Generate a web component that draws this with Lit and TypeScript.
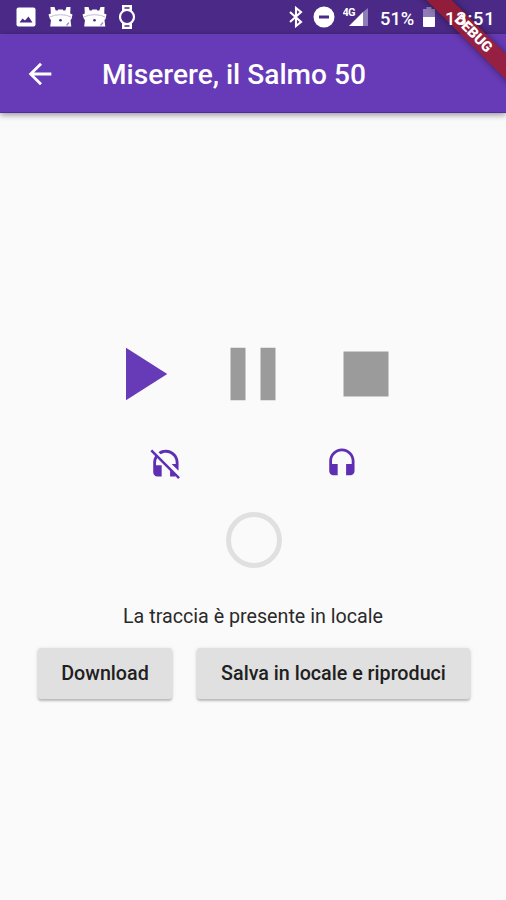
import { LitElement, html, css, svg } from "lit";
import { customElement } from "lit/decorators.js";

const robot = svg`
  <path fill="#fff" d="M2.500 0h4l1.200 3.500h2l.5-1h4.600l.5 1h2L18.500 0h4l-.3 6.500 2.300 1-1 4.500-1 1 .8 6.500H2.200L3 13l-1-1L.5 7.500l2.300-1z"/>
  <path d="M2 10q4-2.300 10.500-2.300T23 10" stroke="#b3a6d0" fill="none" stroke-width=".8"/>
  <circle cx="12.500" cy="13.300" r="1.300" fill="#4a2a86"/>
  <path d="M21 15.500l-2.500 3" stroke="#9c8cc2" stroke-width="1.200"/>`;

@customElement("app-root")
export class AppRoot extends LitElement {
  static styles = css`
    :host {
      display: flex;
      flex-direction: column;
      width: 506px;
      height: 900px;
      position: relative;
      overflow: hidden;
      background: #fafafa;
      font-family: Roboto, sans-serif;
    }
    svg { display: block; flex: none; }
    .status {
      height: 34px;
      flex: none;
      box-sizing: border-box;
      background: #4a2a86;
      color: #fff;
      display: flex;
      align-items: center;
      padding: 0 10px 0 16px;
    }
    .notifications { display: flex; gap: 9px; align-items: center; }
    .robot { margin-left: 3px; }
    .robot + .robot { margin-left: 0; }
    .watch { margin-left: 2px; }
    .system { margin-left: auto; display: flex; align-items: center; font-size: 18.3px; font-weight: 500; }
    .dnd { margin-left: 9px; }
    .signal { margin-left: 8px; }
    .percent { margin-left: 11px; width: 37px; white-space: nowrap; padding-top: 2px; }
    .battery { margin-left: 6px; }
    .clock {
      margin-left: 10px;
      width: 51px;
      letter-spacing: 0.8px;
      white-space: nowrap;
      padding-top: 2px;
      position: relative;
      z-index: 3;
    }
    .bar {
      height: 79px;
      flex: none;
      box-sizing: border-box;
      background: #673ab7;
      border-bottom: 1px solid #5429a6;
      box-shadow: 0 2px 6px rgba(0, 0, 0, 0.4);
      color: #fff;
      display: flex;
      align-items: center;
      padding-left: 23px;
    }
    .back { margin-top: 1px; }
    .title { margin: 3px 0 0 45px; font-size: 28.1px; font-weight: 500; white-space: nowrap; width: 266px; }
    .body { flex: 1; display: flex; flex-direction: column; align-items: center; padding: 216.4px 0 0; }
    .transport { display: flex; gap: 22.5px; }
    .outputs { display: flex; gap: 142.4px; margin: 28.1px 0 0 1px; }
    .ring {
      box-sizing: border-box;
      width: 56px;
      height: 56px;
      border: 5.5px solid #e0e0e0;
      border-radius: 50%;
      margin: 30.75px 0 0 1px;
    }
    .message { margin-top: 37px; font-size: 19.7px; line-height: 24px; color: #2a2a2a; white-space: nowrap; }
    .actions { display: flex; gap: 25px; margin: 18.75px 0 0 2px; }
    .button {
      height: 51px;
      border: 0;
      border-radius: 3px;
      background: #e0e0e0;
      color: #202020;
      font: 500 19.7px Roboto, sans-serif;
      padding: 0;
      white-space: nowrap;
      box-shadow: 0 2px 2px rgba(0, 0, 0, 0.18), 0 1px 4px rgba(0, 0, 0, 0.14);
    }
    .download { width: 134px; }
    .save { width: 273px; }
    .corner { position: absolute; top: 0; right: 0; width: 90px; height: 90px; overflow: hidden; z-index: 2; }
    .debug {
      position: absolute;
      left: -13px;
      top: 24.5px;
      width: 140px;
      height: 18px;
      background: rgba(160, 28, 45, 0.84);
      box-shadow: 0 0 7px rgba(0, 0, 0, 0.45);
      transform: rotate(45deg);
      color: #fff;
      font-size: 14.5px;
      line-height: 18px;
      font-weight: 900;
      text-align: center;
    }
  `;

  render() {
    return html`
      <div class="status">
        <div class="notifications">
          <svg width="20" height="20" viewBox="0 0 20 20"><rect x=".5" y=".5" width="19" height="19" rx="2" fill="#fff"/><path fill="#4a2a86" d="M3.500 15.500l3-4 2.500 2 3.500-4 4 6z"/></svg>
          <svg class="robot" width="25" height="20" viewBox="0 0 25 20">${robot}</svg>
          <svg class="robot" width="25" height="20" viewBox="0 0 25 20">${robot}</svg>
          <svg class="watch" width="18" height="28" viewBox="0 0 18 28"><path fill="#fff" d="M4 2h10v7H4zM4 19h10v7H4z"/><path stroke="#4a2a86" stroke-width="1.500" d="M6.500 5h5M6.500 23h5"/><circle cx="9" cy="14" r="7" fill="#4a2a86" stroke="#fff" stroke-width="2.200"/></svg>
        </div>
        <div class="system">
          <svg width="16" height="22" viewBox="0 0 16 22"><path fill="none" stroke="#fff" stroke-width="2.100" d="M2 6l11 10-5 4V2l5 4L2 16"/></svg>
          <svg class="dnd" width="22" height="22" viewBox="0 0 22 22"><circle cx="11" cy="11" r="10.500" fill="#fff"/><path fill="#4a2a86" d="M6 9.500h10v3H6z"/></svg>
          <svg class="signal" width="26" height="22" viewBox="0 0 26 22"><path fill="#8f7cb8" d="M20 6l5-4v18h-5z"/><path fill="#fff" d="M6 20L20 6v14z"/><text x="-.5" y="10" font-size="11" font-weight="700" fill="#fff" stroke="#4a2a86" stroke-width="1" paint-order="stroke" textLength="13">4G</text></svg>
          <div class="percent">51%</div>
          <svg class="battery" width="12" height="21" viewBox="0 0 12 21"><path fill="#8f7cb8" d="M3.500 0h5v2H12v9H0V2h3.500z"/><path fill="#fff" d="M0 10h12v9q0 1-1 1H1q-1 0-1-1z"/></svg>
          <div class="clock">13:51</div>
        </div>
      </div>
      <div class="bar">
        <svg class="back" width="34" height="34" viewBox="0 0 24 24"><path fill="#fff" d="M20 11H7.830l5.590-5.590L12 4l-8 8 8 8 1.410-1.410L7.830 13H20z"/></svg>
        <div class="title">Miserere, il Salmo 50</div>
      </div>
      <div class="body">
        <div class="transport">
          <svg width="90" height="90" viewBox="0 0 24 24"><path fill="#673ab7" d="M8 5v14l11-7z"/></svg>
          <svg width="90" height="90" viewBox="0 0 24 24"><path fill="#9b9b9b" d="M6 19h4V5H6zM14 5v14h4V5z"/></svg>
          <svg width="90" height="90" viewBox="0 0 24 24"><path fill="#9b9b9b" d="M6 6h12v12H6z"/></svg>
        </div>
        <div class="outputs">
          <svg width="33.750" height="33.750" viewBox="0 0 24 24"><path fill="#5e2fb3" d="M12 4c3.870 0 7 3.130 7 7v1h-2.920L21 16.920V11c0-4.970-4.030-9-9-9-1.950 0-3.760.620-5.230 1.680l1.440 1.440C9.300 4.410 10.600 4 12 4zM2.270 1.720L1 3l3.330 3.320C3.490 7.680 3 9.290 3 11v7c0 1.660 1.340 3 3 3h3v-8H5v-2c0-1.170.290-2.260.790-3.220L15 17v4h3c.300 0 .590-.040.870-.120L20.730 22.730 22 21.460z"/></svg>
          <svg width="33.750" height="33.750" viewBox="0 0 24 24"><path fill="#5e2fb3" d="M12 1c-4.970 0-9 4.030-9 9v7c0 1.660 1.340 3 3 3h3v-8H5v-2c0-3.870 3.130-7 7-7s7 3.130 7 7v2h-4v8h3c1.660 0 3-1.340 3-3v-7c0-4.970-4.030-9-9-9z"/></svg>
        </div>
        <div class="ring"></div>
        <div class="message">La traccia è presente in locale</div>
        <div class="actions">
          <button class="button download">Download</button>
          <button class="button save">Salva in locale e riproduci</button>
        </div>
      </div>
      <div class="corner"><div class="debug">DEBUG</div></div>
    `;
  }
}
